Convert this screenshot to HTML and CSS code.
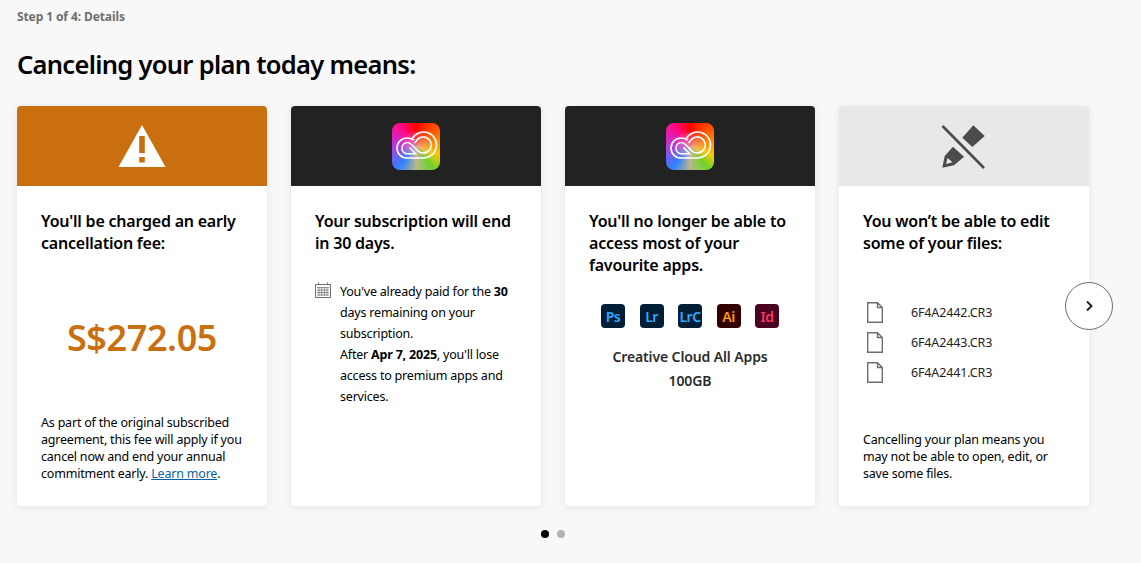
FILE: index.html
```html
<!DOCTYPE html>
<html lang="en">
<head>
    <meta charset="UTF-8">
    <meta name="viewport" content="width=device-width, initial-scale=1.0">
    <title>Cancel your plan</title>
    <link rel="stylesheet" href="styles.css">
</head>
<body>
    <div class="page">
        <div class="step">Step 1 of 4: Details</div>
        <h1>Canceling your plan today means:</h1>

        <div class="carousel">
            <div class="cards">
                <!-- fee -->
                <div class="card">
                    <div class="card-head head-orange">
                        <svg width="48" height="44" viewBox="0 0 48 44">
                            <path fill="#fff" fill-rule="evenodd" d="M24 1 L47.5 43 H0.5 Z M21.2 12 V29 H26.8 V12 Z M21.2 33 V38.5 H26.8 V33 Z"/>
                        </svg>
                    </div>
                    <div class="card-body">
                        <h2>You'll be charged an early cancellation fee:</h2>
                        <div class="amount">S$272.05</div>
                        <p class="note">As part of the original subscribed agreement, this fee will apply if you cancel now and end your annual commitment early. <a href="#">Learn more</a>.</p>
                    </div>
                </div>

                <!-- end date -->
                <div class="card">
                    <div class="card-head head-dark">
                        <div class="cc-logo">
                            <svg width="48" height="47" viewBox="0 0 48 47">
                                <g fill="none" stroke="#fff" stroke-width="1.6">
                                    <path d="M22 17 C20 15.8 18 15 15 15 A10 10 0 0 0 15 35 H30.5 A13 13 0 1 0 20 16"/>
                                    <path d="M15 19.5 C17 19.5 18.5 20.5 20 22 L25.5 27.5 C27 29 28.5 30 30.5 30 A8 8 0 1 0 25 17 L22.5 20"/>
                                    <path d="M15 19.5 A5.7 5.7 0 0 0 15 30.8 H23.5 L17.5 24.5"/>
                                </g>
                            </svg>
                        </div>
                    </div>
                    <div class="card-body">
                        <h2>Your subscription will end in 30 days.</h2>
                        <div class="remaining">
                            <svg class="calendar" width="16" height="16" viewBox="0 0 16 16">
                                <path fill="none" stroke="#6e6e6e" d="M.5 2.5 H15.5 V15.5 H.5 Z M3.5 .5 V3 M12.5 .5 V3"/>
                                <path fill="none" stroke="#8e8e8e" d="M2 5.5 H14 M2 8 H14 M2 10.5 H14 M2 13 H14 M4 5 V14 M6.7 5 V14 M9.4 5 V14 M12 5 V14"/>
                            </svg>
                            <p>You've already paid for the <b>30</b> days remaining on your subscription.<br>After <b>Apr 7, 2025</b>, you'll lose access to premium apps and services.</p>
                        </div>
                    </div>
                </div>

                <!-- apps -->
                <div class="card">
                    <div class="card-head head-dark">
                        <div class="cc-logo">
                            <svg width="48" height="47" viewBox="0 0 48 47">
                                <g fill="none" stroke="#fff" stroke-width="1.6">
                                    <path d="M22 17 C20 15.8 18 15 15 15 A10 10 0 0 0 15 35 H30.5 A13 13 0 1 0 20 16"/>
                                    <path d="M15 19.5 C17 19.5 18.5 20.5 20 22 L25.5 27.5 C27 29 28.5 30 30.5 30 A8 8 0 1 0 25 17 L22.5 20"/>
                                    <path d="M15 19.5 A5.7 5.7 0 0 0 15 30.8 H23.5 L17.5 24.5"/>
                                </g>
                            </svg>
                        </div>
                    </div>
                    <div class="card-body">
                        <h2>You'll no longer be able to access most of your favourite apps.</h2>
                        <div class="apps">
                            <span class="app app-blue">Ps</span>
                            <span class="app app-blue">Lr</span>
                            <span class="app app-blue">LrC</span>
                            <span class="app app-ai">Ai</span>
                            <span class="app app-id">Id</span>
                        </div>
                        <div class="plan-name">Creative Cloud All Apps<br>100GB</div>
                    </div>
                </div>

                <!-- files -->
                <div class="card">
                    <div class="card-head head-grey">
                        <svg width="70" height="60" viewBox="0 0 70 60">
                            <path fill="#4b4b4b" d="M44.3 9.3 L55.7 20 L43.3 31 L33.3 21.7 Z"/>
                            <path fill="#4b4b4b" fill-rule="evenodd" d="M24 30.7 L35 40.7 L25 49.3 L13.3 51.7 L15.7 40 Z M18.5 42 L17 48 L23.5 46.2 Z"/>
                            <path stroke="#4b4b4b" stroke-width="2.6" d="M13.5 10 L55 52"/>
                        </svg>
                    </div>
                    <div class="card-body">
                        <h2>You won’t be able to edit some of your files:</h2>
                        <div class="files">
                            <div class="file">
                                <svg width="16" height="21" viewBox="0 0 16 21"><path fill="none" stroke="#6e6e6e" stroke-width="1.4" d="M.7 .7 H10.5 L15.3 5.5 V20.3 H.7 Z M10.5 .7 V5.5 H15.3"/></svg>
                                <span>6F4A2442.CR3</span>
                            </div>
                            <div class="file">
                                <svg width="16" height="21" viewBox="0 0 16 21"><path fill="none" stroke="#6e6e6e" stroke-width="1.4" d="M.7 .7 H10.5 L15.3 5.5 V20.3 H.7 Z M10.5 .7 V5.5 H15.3"/></svg>
                                <span>6F4A2443.CR3</span>
                            </div>
                            <div class="file">
                                <svg width="16" height="21" viewBox="0 0 16 21"><path fill="none" stroke="#6e6e6e" stroke-width="1.4" d="M.7 .7 H10.5 L15.3 5.5 V20.3 H.7 Z M10.5 .7 V5.5 H15.3"/></svg>
                                <span>6F4A2441.CR3</span>
                            </div>
                        </div>
                        <p class="note">Cancelling your plan means you may not be able to open, edit, or save some files.</p>
                    </div>
                </div>
            </div>

            <button class="next-btn" aria-label="Next">
                <svg width="10" height="12" viewBox="0 0 10 12"><path fill="none" stroke="#222" stroke-width="2" d="M3 1.5 L7.5 6 L3 10.5"/></svg>
            </button>
        </div>

        <div class="dots">
            <span class="dot active"></span>
            <span class="dot"></span>
        </div>
    </div>
</body>
</html>
```

FILE: styles.css
```css
body {
    font-family: "Noto Sans", Arial, sans-serif;
    background: #f8f8f8;
    margin: 0;
    color: #000;
    overflow: hidden;
}

.page {
    padding: 8px 17px 0;
}

.step {
    font-size: 12px;
    line-height: 17px;
    font-weight: 700;
    color: #6e6e6e;
    letter-spacing: -0.1px;
}

h1 {
    font-size: 25.5px;
    line-height: 34px;
    font-weight: 600;
    margin: 22px 0 25px;
    letter-spacing: -0.7px;
}

.carousel {
    position: relative;
    width: 1072px;
}

.cards {
    display: flex;
    gap: 24px;
}

.card {
    width: 250px;
    height: 400px;
    background: #fff;
    border-radius: 4px;
    box-shadow: 0 2px 8px rgba(0, 0, 0, 0.08);
    display: flex;
    flex-direction: column;
    overflow: hidden;
}

.card-head {
    height: 80px;
    flex-shrink: 0;
    display: flex;
    align-items: center;
    justify-content: center;
}

.head-orange {
    background: #c96f10;
}

.head-dark {
    background: #222;
}

.head-grey {
    background: #e8e8e8;
}

.cc-logo {
    width: 48px;
    height: 47px;
    border-radius: 8px;
    overflow: hidden;
    background:
        radial-gradient(circle at 50% 50%, rgba(225, 170, 190, 0.75), rgba(225, 170, 190, 0) 50%),
        conic-gradient(#ff0000 0deg, #ff6a00 60deg, #ffc800 110deg, #6fd32a 140deg, #b9b98a 180deg, #2f80ff 220deg, #b43be0 270deg, #ff0a8c 320deg, #ff0000 360deg);
}

.card-body {
    flex: 1;
    padding: 24px 24px 24px;
    display: flex;
    flex-direction: column;
}

h2 {
    font-size: 16px;
    line-height: 22px;
    font-weight: 600;
    margin: 0;
    min-height: 66px;
    letter-spacing: -0.22px;
}

.amount {
    flex: 1;
    display: flex;
    align-items: center;
    justify-content: center;
    padding-bottom: 16px;
    font-size: 36px;
    font-weight: 600;
    color: #c96f10;
    letter-spacing: -0.4px;
}

.note {
    font-size: 12.5px;
    line-height: 17px;
    margin: 0;
    letter-spacing: -0.2px;
}

.note a {
    color: #0b5fa8;
}

.remaining {
    display: flex;
    gap: 9px;
    margin-top: 5px;
}

.calendar {
    flex-shrink: 0;
    margin-top: 1px;
}

.remaining p {
    font-size: 12.5px;
    line-height: 21px;
    margin: 0;
    letter-spacing: -0.2px;
}

.apps {
    display: flex;
    justify-content: center;
    gap: 14.5px;
    margin-top: 28px;
}

.app {
    width: 24px;
    height: 24px;
    flex-shrink: 0;
    border-radius: 4px;
    display: flex;
    align-items: center;
    justify-content: center;
    font-size: 14px;
    font-weight: 600;
    letter-spacing: -0.5px;
}

.app-blue {
    background: #001e36;
    color: #31a8ff;
}

.app-ai {
    background: #330000;
    color: #ff9a00;
}

.app-id {
    background: #49021f;
    color: #ff3366;
}

.plan-name {
    font-size: 14px;
    line-height: 24px;
    font-weight: 600;
    color: #2c2c2c;
    text-align: center;
    margin-top: 17px;
    letter-spacing: -0.12px;
}

.files {
    margin-top: 21px;
    padding-left: 4px;
}

.file {
    height: 30px;
    display: flex;
    align-items: center;
    gap: 28px;
    font-size: 12.5px;
    letter-spacing: -0.15px;
    color: #222;
}

.files + .note {
    margin-top: auto;
}

.next-btn {
    position: absolute;
    top: 176px;
    left: 1048px;
    width: 48px;
    height: 48px;
    padding: 0;
    border: 1px solid #6e6e6e;
    border-radius: 50%;
    background: #fff;
    display: flex;
    align-items: center;
    justify-content: center;
}

.dots {
    display: flex;
    justify-content: center;
    gap: 8px;
    width: 1072px;
    margin-top: 24px;
}

.dot {
    width: 8px;
    height: 8px;
    border-radius: 50%;
    background: #b3b3b3;
}

.dot.active {
    background: #000;
}
```
